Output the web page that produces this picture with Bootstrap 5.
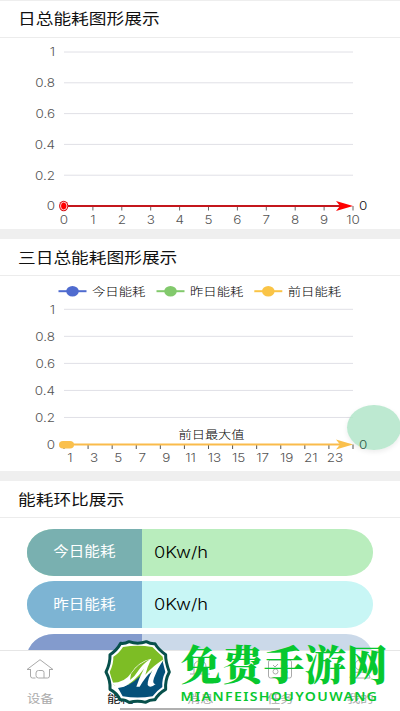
<!DOCTYPE html>
<html lang="zh-CN">
<head>
  <meta charset="UTF-8" />
  <meta name="viewport" content="width=device-width, initial-scale=1.0"/>
  <title>能耗</title>
  <link href="https://cdn.jsdelivr.net/npm/bootstrap@5.3.3/dist/css/bootstrap.min.css" rel="stylesheet"/>
  <style>
    body { font-family: "Noto Sans", "Noto Sans CJK SC", sans-serif; color: #111; }
    svg text { font-family: Inter, "Noto Sans CJK SC", sans-serif; font-weight: 300; }
    .page { height: 711px; width: 400px; }
    .panel-title { height: 37px; border-bottom: 1px solid #ececec; padding-left: 18px; font-size: 15px; line-height: 1; font-weight: 400; }
    .panel-title.first { height: 38px; border-top: 1px solid #eee; padding-bottom: 2px; }
    .stretch { display: inline-block; transform: scaleX(1.18); transform-origin: left center; white-space: nowrap; }
    .stretch-mid { transform-origin: center; }
    .gap-band { height: 10px; background: #efefef; }
    .plot { display: block; width: 400px; }
    .pill-list { padding-top: 11px; }
    .pill { height: 46.5px; border-radius: 27px / 23px; margin: 0 27px 5.8px; flex: none; }
    .pill-name { width: 115px; color: #fff; font-size: 13.2px; font-weight: 400; }
    .pill-value { padding-left: 12px; font-family: Inter, sans-serif; font-size: 15.5px; font-weight: 300; color: #000; }
    .today .pill-name { background: #79b0b0; } .today { background: #b9edbd; }
    .yesterday .pill-name { background: #7db4d3; } .yesterday { background: #c8f6f5; }
    .before .pill-name { background: #839bcd; } .before { background: #cbd9e9; }
    .tabs { height: 61px; border-top: 1px solid #e6e6e6; flex: none; }
    .tab-item { width: 80px; padding-top: 7px; color: #aaa; font-size: 11.3px; font-weight: 400; line-height: 14px; }
    .tab-item svg { width: 28px; height: 22px; margin-bottom: 12px; }
    .tab-item.current { color: #111; }
    .float-ball { left: 347px; top: 405px; width: 53.5px; height: 45px; border-radius: 50%; background: rgba(174, 228, 199, .82); box-shadow: 0 2px 5px rgba(0,0,0,.08); }
    .end-value { left: 0; top: 276px; height: 195px; pointer-events: none; }
    .site-brand { left: 100px; top: 636px; width: 300px; height: 75px; }
    .home-bar { left: 120px; top: 708px; width: 160px; height: 2px; background: #b0b0b0; }
    .brand-name { font-family: "Noto Serif CJK SC", "Noto Sans CJK SC", serif !important; font-weight: 900 !important; }
    .brand-latin { font-family: "Noto Sans", sans-serif !important; font-weight: 600 !important; }
  </style>
</head>
<body class="bg-white overflow-hidden">

  <div class="page position-relative d-flex flex-column overflow-hidden">
    <main class="flex-grow-1 overflow-hidden d-flex flex-column">
      <!-- 日总能耗 -->
      <div class="panel-title first d-flex align-items-center flex-shrink-0"><span class="stretch">日总能耗图形展示</span></div>
      <svg class="plot flex-shrink-0" id="dayPlot" height="191" viewBox="0 38 400 191"></svg>
      <div class="gap-band flex-shrink-0"></div>

      <!-- 三日总能耗 -->
      <div class="panel-title d-flex align-items-center flex-shrink-0"><span class="stretch">三日总能耗图形展示</span></div>
      <svg class="plot flex-shrink-0" id="threePlot" height="195" viewBox="0 276 400 195"></svg>
      <div class="gap-band flex-shrink-0"></div>

      <!-- 环比 -->
      <div class="panel-title d-flex align-items-center flex-shrink-0"><span class="stretch">能耗环比展示</span></div>
      <div class="pill-list d-flex flex-column">
        <div class="pill today d-flex overflow-hidden">
          <div class="pill-name d-flex align-items-center justify-content-center"><span class="stretch stretch-mid">今日能耗</span></div>
          <div class="pill-value d-flex align-items-center"><span class="stretch">0Kw/h</span></div>
        </div>
        <div class="pill yesterday d-flex overflow-hidden">
          <div class="pill-name d-flex align-items-center justify-content-center"><span class="stretch stretch-mid">昨日能耗</span></div>
          <div class="pill-value d-flex align-items-center"><span class="stretch">0Kw/h</span></div>
        </div>
        <div class="pill before d-flex overflow-hidden">
          <div class="pill-name"></div>
        </div>
      </div>
    </main>

    <nav class="tabs d-flex bg-white">
      <div class="tab-item d-flex flex-column align-items-center">
        <svg viewBox="0 0 28 22" fill="none" stroke="#aaa" stroke-width="1"><path d="M1 11.500 14 1.700 27 11.500M1 11.500h3.500M27 11.500h-3.500M4.500 11v7q0 2 2 2h3M23.500 11v7q0 2-2 2h-9q-2.500 0-2.500-2.500V15q0-2.500 2.500-2.500H16q2 0 2 2V20"/></svg>
        <span class="stretch stretch-mid">设备</span>
      </div>
      <div class="tab-item current d-flex flex-column align-items-center">
        <svg viewBox="0 0 28 22" fill="none" stroke="#222"><path d="M8 3v17h14V3z"/></svg>
        <span class="stretch stretch-mid">能耗</span>
      </div>
      <div class="tab-item d-flex flex-column align-items-center">
        <svg viewBox="0 0 28 22" fill="none" stroke="#aaa"><path d="M4 16h20M8 16V9q0-6 6-6t6 6v7"/></svg>
        <span class="stretch stretch-mid">消息</span>
      </div>
      <div class="tab-item d-flex flex-column align-items-center">
        <svg viewBox="0 0 28 22" fill="none" stroke="#aaa"><rect x="2.500" y="2" width="23" height="18" rx="2"/><circle cx="9.500" cy="13.500" r="2.500"/><path d="m7 7 2 2 3-3M15 8h7M15 14h7"/></svg>
        <span class="stretch stretch-mid">任务</span>
      </div>
      <div class="tab-item d-flex flex-column align-items-center">
        <svg viewBox="0 0 28 22" fill="none" stroke="#aaa"><circle cx="14" cy="7" r="5"/><path d="M4 20q0-6 10-6t10 6z"/></svg>
        <span class="stretch stretch-mid">我的</span>
      </div>
    </nav>

    <div class="float-ball position-absolute"></div>
    <svg class="plot end-value position-absolute" id="endValue" viewBox="0 276 400 195"></svg>
    <div class="home-bar position-absolute"></div>

    <svg class="site-brand position-absolute" viewBox="0 0 300 75">
      <g transform="scale(.3333)">
        <path d="M62 22Q74 24 87 17Q113 26 139 17Q152 24 165 23Q174 40 197 56Q196 76 208 108Q195 132 197 160Q176 172 165 191Q150 190 137 199Q113 192 87 199Q76 190 60 191Q52 172 30 160Q32 134 18 108Q31 82 30 56Q50 44 62 22Z" fill="#fff" stroke="#07504b" stroke-width="9" stroke-linejoin="round"/>
        <path d="M69 33Q113 26 157 33L188 62 190 76 150 110 90 145 42 148 34 125 29 108Q41 84 40 62Q57 52 69 33Z" fill="#7dbd25"/>
        <path d="M188 76 196 108Q185 130 187 153Q168 166 158 181Q113 188 68 181L54 156Q90 150 118 122L150 112Z" fill="#05517a"/>
        <path d="M36 140Q75 140 94 110Q116 76 154 68Q142 92 136 116Q164 86 191 70Q172 98 162 126Q156 144 167 144Q150 159 143 147Q142 130 158 102Q138 120 119 152L109 152Q118 124 132 98Q104 136 74 151Q52 158 36 140Z" fill="#fff"/>
        <path d="M93 114Q116 80 150 70Q128 84 112 108Q104 122 90 132Z" fill="#7dbd25"/>
      </g>
      <text class="brand-name" x="80.500" y="43.500" textLength="207" fill="#07c82f" font-size="41">免费手游网</text>
      <text class="brand-latin" transform="translate(80.500 65) scale(1.150 1)" textLength="171" fill="#07c82f" font-size="12.300">MIANFEISHOUYOUWANG</text>
    </svg>
  </div>

  <script src="https://cdn.jsdelivr.net/npm/bootstrap@5.3.3/dist/js/bootstrap.bundle.min.js"></script>
  <script>
    const left = 64, right = 353;

    function label(x, y, txt, size, anchor, color, k) {
      return `<text transform="translate(${x} ${y}) scale(${k || 1.14} 1)" font-size="${size}" text-anchor="${anchor}" fill="${color}">${txt}</text>`;
    }

    function gridLines(top, bottom) {
      let out = "";
      ["1", "0.8", "0.6", "0.4", "0.2", "0"].forEach((v, i) => {
        const y = top + (bottom - top) * i / 5;
        if (i < 5) out += `<path d="M${left} ${y}H${right}" stroke="#e0e0e6" stroke-width="1"/>`;
        out += label(55, y + 4.3, v, 11.8, "end", "#555");
      });
      return out;
    }

    // 日总能耗
    let day = gridLines(52, 206);
    for (let i = 0; i <= 10; i++) {
      const x = left + (right - left) * i / 10;
      day += `<path d="M${x} 206v4.500" stroke="#666"/>` + label(x, 223.5, i, 11.8, "middle", "#555");
    }
    day += `<path d="M64 206H345" stroke="#c4161c" stroke-width="2"/>
      <path d="M353 206 336 201 340 206 336 211Z" fill="#f00"/>
      <ellipse cx="63.700" cy="206" rx="4.600" ry="5.300" fill="#d90f14"/>
      <ellipse cx="63.700" cy="206" rx="3.200" ry="3.900" fill="#f00" stroke="#fff" stroke-width=".8"/>`;
    day += label(359, 210.3, "0", 11.8, "start", "#111");
    document.getElementById("dayPlot").innerHTML = day;

    // 三日总能耗
    let three = gridLines(309.3, 444.5);
    for (let i = 0; i <= 12; i++) {
      const x = left + (right - left) * i / 12;
      three += `<path d="M${x} 444.500v4.500" stroke="#555"/>`;
      if (i < 12) three += label(x + 6, 462.2, i * 2 + 1, 11.8, "middle", "#555");
    }
    [["今日能耗", "#4f6bcf", 58.5], ["昨日能耗", "#82c96c", 156.5], ["前日能耗", "#fac446", 254.3]].forEach(([name, color, x]) => {
      three += `<path d="M${x} 291.200h28" stroke="${color}" stroke-width="2"/>
        <ellipse cx="${x + 14}" cy="291.200" rx="6.300" ry="5.200" fill="${color}"/>`;
      three += label(x + 33.5, 295.7, name, 11.4, "start", "#000", 1.17);
    });
    three += `<path d="M64 444.500H343" stroke="#fabb4b" stroke-width="1.800"/>
      <path d="M353 444.500 336 439.500 340 444.500 336 449.500Z" fill="#fac04c"/>
      <rect x="59" y="441" width="15" height="7.500" rx="4" fill="#fac04c"/>`;
    three += label(178.5, 438.8, "前日最大值", 11.4, "start", "#000", 1.16);
    document.getElementById("threePlot").innerHTML = three;
    document.getElementById("endValue").innerHTML = label(359, 448.8, "0", 11.8, "start", "#2f5a47");
  </script>
</body>
</html>
